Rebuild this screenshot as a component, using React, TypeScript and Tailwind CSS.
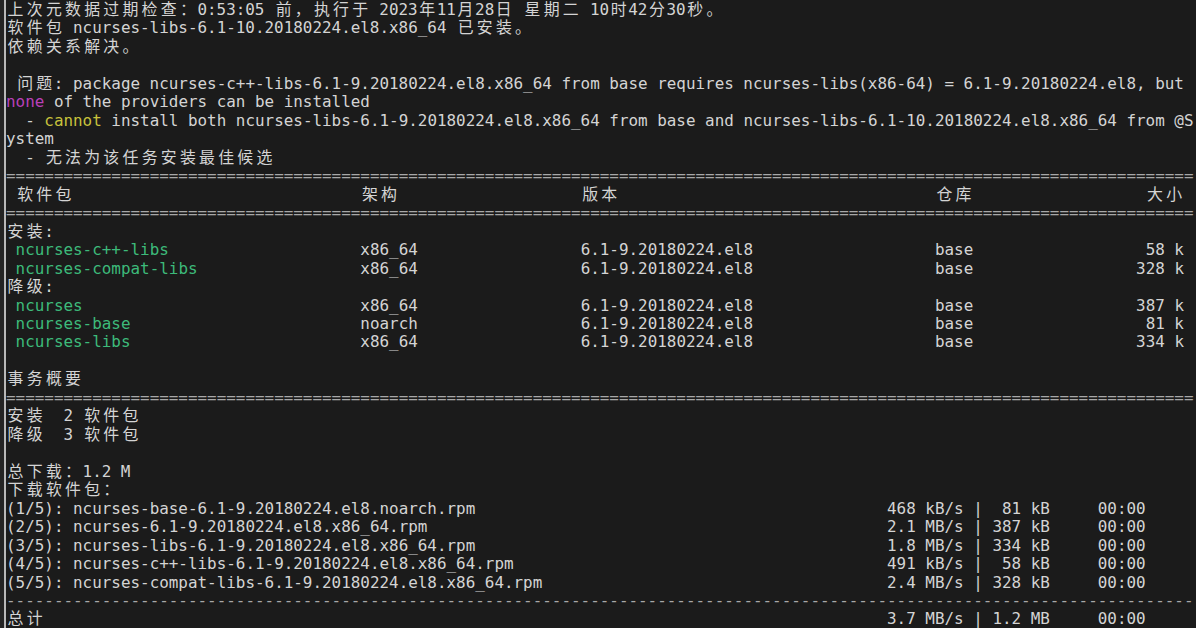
import React from "react";

type Seg = { t: string; c?: string };
type Cell = { col: number; t: string; c?: string; right?: boolean };

const GREEN = "text-[#3dba7a]";
const PURPLE = "text-[#b940b9]";
const YELLOW = "text-[#c8c23c]";
const SEP = "text-[#a8a8a8]";

const isWide = (ch: string) => {
  const code = ch.codePointAt(0) || 0;
  return (
    (code >= 0x2e80 && code <= 0x9fff) ||
    (code >= 0xff00 && code <= 0xff60) ||
    (code >= 0x3000 && code <= 0x303f)
  );
};
const dw = (s: string) => Array.from(s).reduce((a, ch) => a + (isWide(ch) ? 2 : 1), 0);

function cols(cells: Cell[]): Seg[] {
  const out: Seg[] = [];
  let pos = 0;
  for (const cell of cells) {
    const start = cell.right ? cell.col - dw(cell.t) + 1 : cell.col;
    if (start > pos) {
      out.push({ t: " ".repeat(start - pos) });
      pos = start;
    }
    out.push({ t: cell.t, c: cell.c });
    pos += dw(cell.t);
  }
  return out;
}

const plain = (t: string): Seg[] => [{ t }];

const pkg = (name: string, arch: string, ver: string, repo: string, size: string): Seg[] =>
  cols([
    { col: 1, t: name, c: GREEN },
    { col: 37, t: arch },
    { col: 60, t: ver },
    { col: 97, t: repo },
    { col: 122, t: size, right: true },
  ]);

const dl = (name: string, rate: string, size: string): Seg[] =>
  cols([
    { col: 0, t: name },
    { col: 99, t: rate, right: true },
    { col: 101, t: "|" },
    { col: 108, t: size, right: true },
    { col: 114, t: "00:00" },
  ]);

const EQ: Seg[] = [{ t: "=".repeat(124), c: SEP }];
const DASH: Seg[] = [{ t: "-".repeat(124), c: SEP }];

const lines: Seg[][] = [
  plain("上次元数据过期检查：0:53:05 前，执行于 2023年11月28日 星期二 10时42分30秒。"),
  plain("软件包 ncurses-libs-6.1-10.20180224.el8.x86_64 已安装。"),
  plain("依赖关系解决。"),
  plain(""),
  plain(
    " 问题: package ncurses-c++-libs-6.1-9.20180224.el8.x86_64 from base requires ncurses-libs(x86-64) = 6.1-9.20180224.el8, but "
  ),
  [{ t: "none", c: PURPLE }, { t: " of the providers can be installed" }],
  [
    { t: "  - " },
    { t: "cannot", c: YELLOW },
    {
      t: " install both ncurses-libs-6.1-9.20180224.el8.x86_64 from base and ncurses-libs-6.1-10.20180224.el8.x86_64 from @S",
    },
  ],
  plain("ystem"),
  plain("  - 无法为该任务安装最佳候选"),
  EQ,
  cols([
    { col: 1, t: "软件包" },
    { col: 37, t: "架构" },
    { col: 60, t: "版本" },
    { col: 97, t: "仓库" },
    { col: 122, t: "大小", right: true },
  ]),
  EQ,
  plain("安装:"),
  pkg("ncurses-c++-libs", "x86_64", "6.1-9.20180224.el8", "base", "58 k"),
  pkg("ncurses-compat-libs", "x86_64", "6.1-9.20180224.el8", "base", "328 k"),
  plain("降级:"),
  pkg("ncurses", "x86_64", "6.1-9.20180224.el8", "base", "387 k"),
  pkg("ncurses-base", "noarch", "6.1-9.20180224.el8", "base", "81 k"),
  pkg("ncurses-libs", "x86_64", "6.1-9.20180224.el8", "base", "334 k"),
  plain(""),
  plain("事务概要"),
  EQ,
  plain("安装  2 软件包"),
  plain("降级  3 软件包"),
  plain(""),
  plain("总下载：1.2 M"),
  plain("下载软件包："),
  dl("(1/5): ncurses-base-6.1-9.20180224.el8.noarch.rpm", "468 kB/s", "81 kB"),
  dl("(2/5): ncurses-6.1-9.20180224.el8.x86_64.rpm", "2.1 MB/s", "387 kB"),
  dl("(3/5): ncurses-libs-6.1-9.20180224.el8.x86_64.rpm", "1.8 MB/s", "334 kB"),
  dl("(4/5): ncurses-c++-libs-6.1-9.20180224.el8.x86_64.rpm", "491 kB/s", "58 kB"),
  dl("(5/5): ncurses-compat-libs-6.1-9.20180224.el8.x86_64.rpm", "2.4 MB/s", "328 kB"),
  DASH,
  dl("总计", "3.7 MB/s", "1.2 MB"),
];

function renderText(t: string, key: string) {
  const parts: React.ReactNode[] = [];
  let buf = "";
  let i = 0;
  for (const ch of Array.from(t)) {
    if (isWide(ch)) {
      if (buf) {
        parts.push(buf);
        buf = "";
      }
      parts.push(
        <span key={key + "-" + i} className="inline-block w-[2ch] text-center">
          {ch}
        </span>
      );
    } else {
      buf += ch;
    }
    i++;
  }
  if (buf) parts.push(buf);
  return parts;
}

export default function App() {
  return (
    <div className="w-[1196px] h-[628px] overflow-hidden bg-[#1b1b1b] flex">
      <div className="w-[4px] shrink-0 bg-[#242424]" />
      <div className="w-[2px] shrink-0 bg-[#b8b8b8]" />
      <div
        className="flex-1 mt-[1px] text-[15.92px] text-[#d4d4d4] overflow-hidden"
        style={{ fontFamily: '"DejaVu Sans Mono", "Noto Sans CJK SC", monospace' }}
      >
        {lines.map((segs, li) => (
          <div key={li} className="h-[18.48px] leading-[18.48px] whitespace-pre overflow-visible">
            {segs.map((s, si) => (
              <span key={si} className={s.c}>
                {renderText(s.t, li + "-" + si)}
              </span>
            ))}
          </div>
        ))}
      </div>
    </div>
  );
}
